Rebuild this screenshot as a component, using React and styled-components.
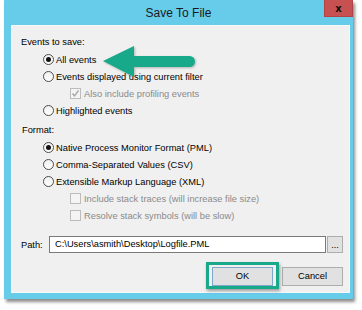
import styled, { createGlobalStyle } from 'styled-components'

const GlobalStyle = createGlobalStyle`
    html, body {
        margin: 0;
        padding: 0;
        background: #ffffff;
    }
`

const Page = styled.div`
    position: relative;
    width: 362px;
    height: 310px;
    padding-left: 4px;
    box-sizing: border-box;
`

const Window = styled.div`
    display: flex;
    flex-direction: column;
    width: 349px;
    height: 299px;
    background: #67cbea;
    box-shadow: 2px 3px 3px rgba(0, 0, 0, 0.45);
`

const TitleBar = styled.div`
    display: grid;
    grid-template-columns: 29px 1fr 29px;
    align-items: start;
    height: 25px;
`

const Title = styled.div`
    grid-column: 2;
    text-align: center;
    font-family: "Liberation Sans", Arial, sans-serif;
    font-size: 12px;
    line-height: 26px;
    color: #1a1a1a;
`

const CloseButton = styled.div`
    grid-column: 3;
    height: 17px;
    display: flex;
    align-items: center;
    justify-content: center;
    background: #c75050;
    border: 1px solid #b04444;
    border-top: none;
    box-sizing: border-box;
    font-family: "DejaVu Sans", sans-serif;
    font-size: 10px;
    font-weight: bold;
    color: #111;
`

const Body = styled.div`
    display: flex;
    flex-direction: column;
    margin: 0 3px 6px 7px;
    height: 268px;
    background: #f0f0f0;
    border: 1px solid #f8f8f8;
    box-sizing: border-box;
    padding: 8px 0 0 0;
    font-family: "Liberation Sans", Arial, sans-serif;
    font-size: 9.3px;
    color: #000;
`

const GroupLabel = styled.div`
    height: 17px;
    line-height: 17px;
    padding-left: ${p => p.$indent}px;
    margin-top: ${p => p.$gap || 0}px;
`

const OptionRow = styled.div`
    display: flex;
    align-items: center;
    height: 17px;
    padding-left: ${p => p.$indent}px;
    color: ${p => p.$disabled ? '#8a8a8a' : '#000'};
`

const RadioCircle = styled.span`
    display: flex;
    align-items: center;
    justify-content: center;
    width: 11px;
    height: 11px;
    border-radius: 50%;
    border: 1px solid #4d4d4d;
    box-sizing: border-box;
    background: linear-gradient(#f0f0f0, #ffffff);
    margin-right: 2px;

    &::after {
        content: "";
        display: ${p => p.$checked ? 'block' : 'none'};
        width: 5px;
        height: 5px;
        border-radius: 50%;
        background: #111;
    }
`

const CheckBox = styled.span`
    display: flex;
    align-items: center;
    justify-content: center;
    width: 11px;
    height: 11px;
    border: 1px solid #bcbcbc;
    box-sizing: border-box;
    background: #f4f4f4;
    margin-right: 3px;
`

const PathRow = styled.div`
    display: flex;
    align-items: center;
    height: 17px;
    margin-top: 12px;
    padding-left: 9px;
`

const PathLabel = styled.span`
    width: 28px;
`

const PathInput = styled.div`
    width: 277px;
    height: 17px;
    box-sizing: border-box;
    border: 1px solid #7a7a7a;
    background: #fff;
    padding-left: 5px;
    line-height: 15px;
    white-space: nowrap;
`

const BrowseButton = styled.div`
    width: 16px;
    height: 17px;
    margin-left: 1px;
    box-sizing: border-box;
    border: 1px solid #adadad;
    background: #e1e1e1;
    text-align: center;
    line-height: 16px;
`

const ButtonRow = styled.div`
    display: flex;
    justify-content: flex-end;
    gap: 9px;
    margin-top: 14px;
    padding-right: 6px;
`

const Highlight = styled.div`
    position: relative;

    &::before {
        content: "";
        position: absolute;
        left: -6px;
        right: -6px;
        top: -5px;
        bottom: -3px;
        border: 3px solid #17a98a;
        box-shadow: 1px 2px 3px rgba(0, 0, 0, 0.35);
        pointer-events: none;
    }
`

const DialogButton = styled.div`
    width: 61px;
    height: 19px;
    box-sizing: border-box;
    border: 1px solid ${p => p.$default ? '#7fa7c9' : '#adadad'};
    background: #e1e1e1;
    text-align: center;
    line-height: 17px;
`

const Arrow = styled.svg`
    position: absolute;
    left: 100px;
    top: 44px;
    filter: drop-shadow(1px 1px 1px rgba(0, 0, 0, 0.25));
`

const Check = () => (
    <svg width="9" height="9" viewBox="0 0 9 9">
        <path d="M1.5 4.5 L3.5 6.8 L7.5 1.5" fill="none" stroke="#a8a8a8" strokeWidth="1.4" />
    </svg>
)

const Radio = ({ checked, label }) => (
    <OptionRow $indent={31}>
        <RadioCircle $checked={checked} />
        <span>{label}</span>
    </OptionRow>
)

const Option = ({ checked, label }) => (
    <OptionRow $indent={58} $disabled>
        <CheckBox>{checked && <Check />}</CheckBox>
        <span>{label}</span>
    </OptionRow>
)

const App = () => {
    return (
        <Page>
            <GlobalStyle />
            <Window>
                <TitleBar>
                    <Title>Save To File</Title>
                    <CloseButton>x</CloseButton>
                </TitleBar>
                <Body>
                    <GroupLabel $indent={9}>Events to save:</GroupLabel>
                    <Radio checked label="All events" />
                    <Radio label="Events displayed using current filter" />
                    <Option checked label="Also include profiling events" />
                    <Radio label="Highlighted events" />
                    <GroupLabel $indent={10} $gap={3}>Format:</GroupLabel>
                    <Radio checked label="Native Process Monitor Format (PML)" />
                    <Radio label="Comma-Separated Values (CSV)" />
                    <Radio label="Extensible Markup Language (XML)" />
                    <Option label="Include stack traces (will increase file size)" />
                    <Option label="Resolve stack symbols (will be slow)" />
                    <PathRow>
                        <PathLabel>Path:</PathLabel>
                        <PathInput>C:\Users\asmith\Desktop\Logfile.PML</PathInput>
                        <BrowseButton>...</BrowseButton>
                    </PathRow>
                    <ButtonRow>
                        <Highlight>
                            <DialogButton $default>OK</DialogButton>
                        </Highlight>
                        <DialogButton>Cancel</DialogButton>
                    </ButtonRow>
                </Body>
            </Window>
            <Arrow width="100" height="36" viewBox="0 0 100 36">
                <path d="M3 17 L34 2 L34 12 L89.5 12 A5.5 5.5 0 0 1 89.5 23 L34 23 L34 33 Z" fill="#17a98a" />
            </Arrow>
        </Page>
    )
}

export default App
